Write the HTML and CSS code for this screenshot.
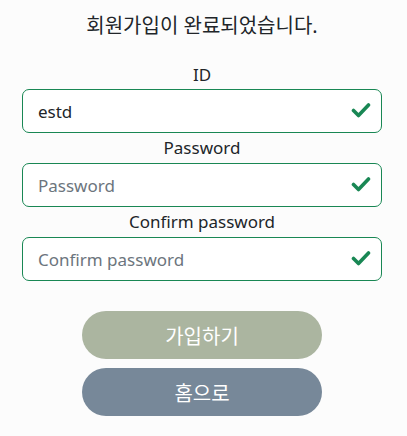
FILE: index.html
```html
<!DOCTYPE html>
<html lang="ko">
<head>
<meta charset="utf-8">
<link rel="stylesheet" href="styles.css">
</head>
<body>
<main class="page">
  <h1 class="title">회원가입이 완료되었습니다.</h1>
  <form class="form">
    <div class="field field-first">
      <label class="label" for="id">ID</label>
      <div class="control">
        <input class="input" id="id" type="text" value="estd">
        <svg class="check" viewBox="0 0 20 17" width="20" height="17"><polyline points="2.5,8.5 7.5,13.5 17.5,3" fill="none" stroke="#198754" stroke-width="3.6" stroke-linecap="round" stroke-linejoin="round"/></svg>
      </div>
    </div>
    <div class="field">
      <label class="label" for="pw">Password</label>
      <div class="control">
        <input class="input" id="pw" type="password" placeholder="Password">
        <svg class="check" viewBox="0 0 20 17" width="20" height="17"><polyline points="2.5,8.5 7.5,13.5 17.5,3" fill="none" stroke="#198754" stroke-width="3.6" stroke-linecap="round" stroke-linejoin="round"/></svg>
      </div>
    </div>
    <div class="field">
      <label class="label" for="pw2">Confirm password</label>
      <div class="control">
        <input class="input" id="pw2" type="password" placeholder="Confirm password">
        <svg class="check" viewBox="0 0 20 17" width="20" height="17"><polyline points="2.5,8.5 7.5,13.5 17.5,3" fill="none" stroke="#198754" stroke-width="3.6" stroke-linecap="round" stroke-linejoin="round"/></svg>
      </div>
    </div>
    <div class="buttons">
      <button type="button" class="btn btn-join">가입하기</button>
      <button type="button" class="btn btn-home">홈으로</button>
    </div>
  </form>
</main>
</body>
</html>
```
FILE: styles.css
```css
html, body {
  margin: 0;
  padding: 0;
  background: #fcfcfc;
}
body {
  font-family: "Noto Sans", "Noto Sans CJK KR", sans-serif;
  color: #212529;
}
.page {
  width: 360px;
  margin-left: 22px;
  padding-top: 12px;
}
.title {
  margin: 0;
  font-size: 20px;
  font-weight: 400;
  line-height: 28px;
  text-align: center;
}
.form {
  display: flex;
  flex-direction: column;
}
.field-first {
  margin-top: 20px;
}
.label {
  display: block;
  height: 29px;
  line-height: 29px;
  font-size: 17px;
  text-align: center;
}
.field + .field .label {
  height: 30px;
  line-height: 30px;
}
.control {
  position: relative;
  display: flex;
}
.input {
  box-sizing: border-box;
  width: 360px;
  height: 44px;
  padding: 0 44px 0 15px;
  border: 1px solid #198754;
  border-radius: 7px;
  background: #fff;
  font-family: "Noto Sans", "Noto Sans CJK KR", sans-serif;
  font-size: 17px;
  color: #212529;
  outline: none;
}
.input::placeholder {
  color: #6c757d;
  opacity: 1;
}
.check {
  position: absolute;
  right: 11px;
  top: 13px;
}
.buttons {
  display: flex;
  flex-direction: column;
  align-items: center;
  gap: 9px;
  margin-top: 30px;
}
.btn {
  width: 240px;
  height: 48px;
  border: none;
  border-radius: 24px;
  font-family: "Noto Sans CJK KR", sans-serif;
  font-size: 20px;
  color: #fff;
  padding: 0;
}
.btn-join {
  background: #abb5a0;
}
.btn-home {
  background: #778899;
}
```
